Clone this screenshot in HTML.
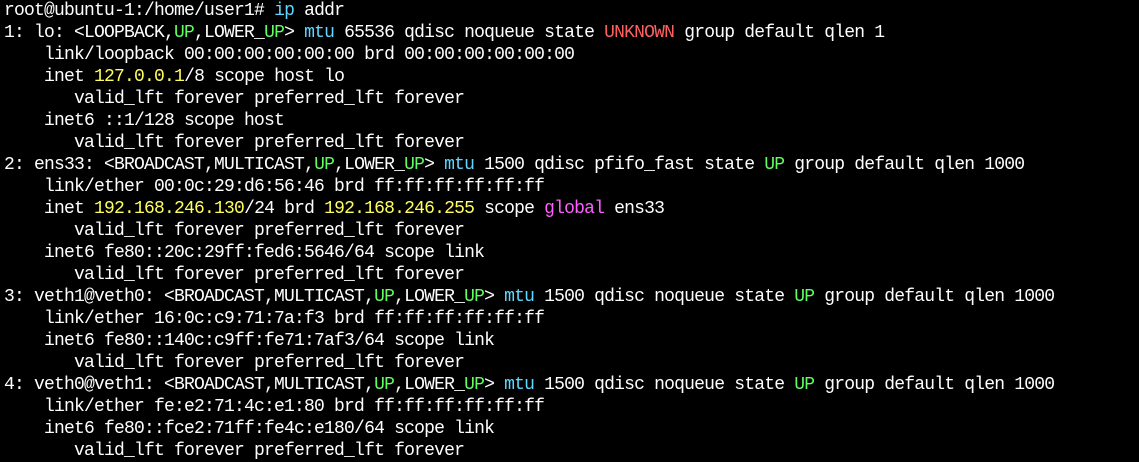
<!DOCTYPE html><html><head><style>
body{margin:0;background:#000;width:1139px;height:460px;overflow:hidden}
pre{margin:0;padding:0 0 0 4px;font-family:"Liberation Mono",monospace;font-size:18px;letter-spacing:-0.8px;line-height:22px;color:#fff;white-space:pre}
.c{color:#5fd7ff}.g{color:#5fff5f}.r{color:#ff5f5f}.y{color:#ffff5f}.m{color:#ff5fff}
</style></head><body><pre>root@ubuntu-1:/home/user1# <span class="c">ip</span> addr
1: lo: &lt;LOOPBACK,<span class="g">UP</span>,LOWER_<span class="g">UP</span>&gt; <span class="c">mtu</span> 65536 qdisc noqueue state <span class="r">UNKNOWN</span> group default qlen 1
    link/loopback 00:00:00:00:00:00 brd 00:00:00:00:00:00
    inet <span class="y">127.0.0.1</span>/8 scope host lo
       valid_lft forever preferred_lft forever
    inet6 ::1/128 scope host
       valid_lft forever preferred_lft forever
2: ens33: &lt;BROADCAST,MULTICAST,<span class="g">UP</span>,LOWER_<span class="g">UP</span>&gt; <span class="c">mtu</span> 1500 qdisc pfifo_fast state <span class="g">UP</span> group default qlen 1000
    link/ether 00:0c:29:d6:56:46 brd ff:ff:ff:ff:ff:ff
    inet <span class="y">192.168.246.130</span>/24 brd <span class="y">192.168.246.255</span> scope <span class="m">global</span> ens33
       valid_lft forever preferred_lft forever
    inet6 fe80::20c:29ff:fed6:5646/64 scope link
       valid_lft forever preferred_lft forever
3: veth1@veth0: &lt;BROADCAST,MULTICAST,<span class="g">UP</span>,LOWER_<span class="g">UP</span>&gt; <span class="c">mtu</span> 1500 qdisc noqueue state <span class="g">UP</span> group default qlen 1000
    link/ether 16:0c:c9:71:7a:f3 brd ff:ff:ff:ff:ff:ff
    inet6 fe80::140c:c9ff:fe71:7af3/64 scope link
       valid_lft forever preferred_lft forever
4: veth0@veth1: &lt;BROADCAST,MULTICAST,<span class="g">UP</span>,LOWER_<span class="g">UP</span>&gt; <span class="c">mtu</span> 1500 qdisc noqueue state <span class="g">UP</span> group default qlen 1000
    link/ether fe:e2:71:4c:e1:80 brd ff:ff:ff:ff:ff:ff
    inet6 fe80::fce2:71ff:fe4c:e180/64 scope link
       valid_lft forever preferred_lft forever
</pre></body></html>
